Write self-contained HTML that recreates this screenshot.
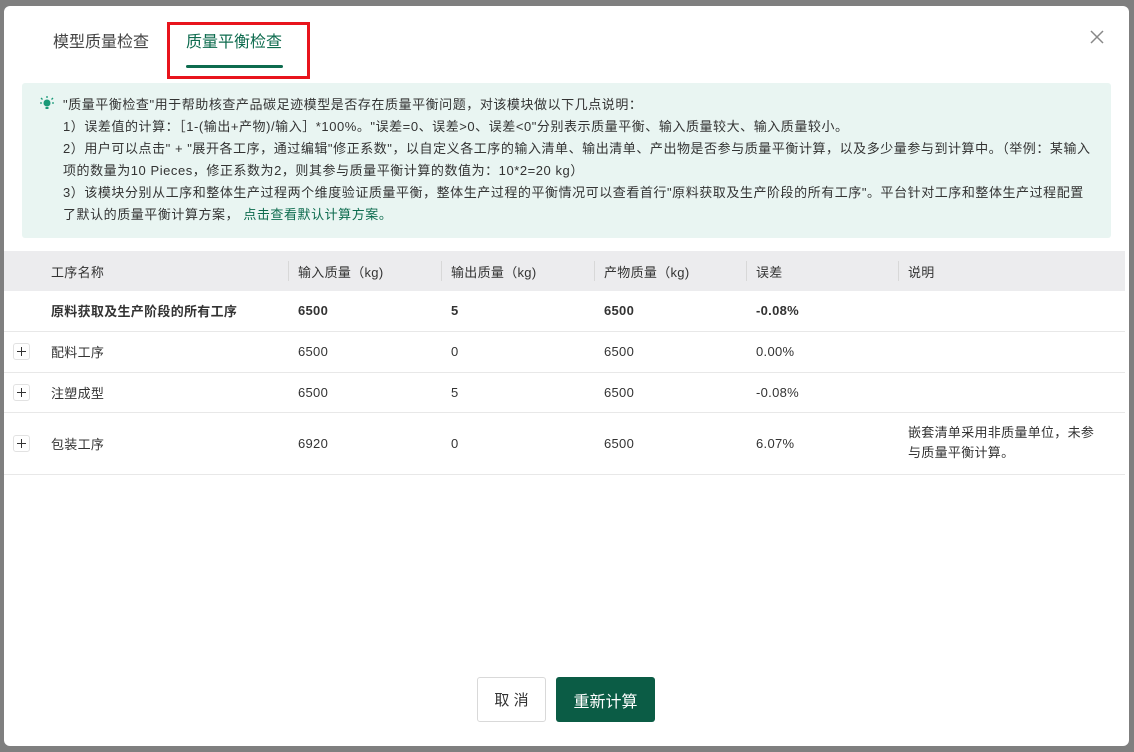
<!DOCTYPE html>
<html><head><meta charset="utf-8"><style>
*{margin:0;padding:0;box-sizing:border-box}
body{width:1134px;height:752px;background:#7f7f7f;font-family:"Liberation Sans","Noto Sans CJK SC",sans-serif;color:#333;position:relative;overflow:hidden}
.modal{position:absolute;left:4px;top:6px;width:1125px;height:740px;background:#fff;border-radius:6px}
.tab{position:absolute;top:28px;font-size:16px;color:#444}
.redbox{position:absolute;left:167px;top:22px;width:143px;height:57px;border:3px solid #e8141c}
.ul{position:absolute;left:186px;top:65px;width:97px;height:3px;background:#0d6b4e;border-radius:2px}
.close{position:absolute;left:1088px;top:28px;width:18px;height:18px}
.notice{position:absolute;left:22px;top:83px;width:1089px;height:155px;background:#e9f5f2;border-radius:3px;font-size:13px;letter-spacing:0.55px;line-height:22px;color:#333;padding:11px 0 0 41px;white-space:nowrap}
.notice a{color:#0d6b4e;text-decoration:none}
.bulb{position:absolute;left:40px;top:96px}
table{position:absolute;left:4px;top:251px;width:1121px;border-collapse:collapse;font-size:13px;letter-spacing:0.3px}
th{background:#ececee;font-weight:normal;text-align:left;height:40px;color:#333;position:relative}
td{height:40px;border-bottom:1px solid #e8e8e8;color:#333}
th.s::before{content:"";position:absolute;left:0;top:10px;height:20px;width:1px;background:#d8d8d8}
th,td{padding-left:10px}
td.c0,th.c0{width:47px;padding:0}
td.c1,th.c1{width:237px;padding-left:0}
.pl{display:inline-block;width:17px;height:17px;border:1px solid #e2e2e2;border-radius:3px;margin-left:9px;position:relative;vertical-align:middle}
.pl::before{content:"";position:absolute;left:3px;top:7px;width:9px;height:1px;background:#333}
.pl::after{content:"";position:absolute;left:7px;top:3px;width:1px;height:9px;background:#333}
.b td{font-weight:bold}
.btn{position:absolute;top:677px;height:45px;font-size:15px;border-radius:3px;display:flex;align-items:center;justify-content:center}
</style></head><body>
<div class="modal"></div>
<div class="tab" style="left:53px">模型质量检查</div>
<div class="tab" style="left:186px;color:#0d6b4e">质量平衡检查</div>
<div class="ul"></div>
<div class="redbox"></div>
<svg class="close" viewBox="0 0 18 18"><path d="M3 3L15 15M15 3L3 15" stroke="#888" stroke-width="1.5"/></svg>
<div class="notice">"质量平衡检查"用于帮助核查产品碳足迹模型是否存在质量平衡问题，对该模块做以下几点说明：<br>
1）误差值的计算：［1-(输出+产物)/输入］*100%。"误差=0、误差&gt;0、误差&lt;0"分别表示质量平衡、输入质量较大、输入质量较小。<br>
2）用户可以点击" + "展开各工序，通过编辑"修正系数"，以自定义各工序的输入清单、输出清单、产出物是否参与质量平衡计算，以及多少量参与到计算中。（举例：某输入<br>
项的数量为10 Pieces，修正系数为2，则其参与质量平衡计算的数值为：10*2=20 kg）<br>
3）该模块分别从工序和整体生产过程两个维度验证质量平衡，整体生产过程的平衡情况可以查看首行"原料获取及生产阶段的所有工序"。平台针对工序和整体生产过程配置<br>
了默认的质量平衡计算方案，&nbsp;<a>点击查看默认计算方案。</a></div>
<svg class="bulb" width="14" height="16" viewBox="0 0 14 16"><circle cx="7" cy="7" r="3.5" fill="#1a9a78"/><rect x="5.5" y="11" width="3" height="2" fill="#1a9a78"/><path d="M7 0v2M1 2l1.5 1.5M13 2l-1.5 1.5M0 7h2M12 7h2" stroke="#1a9a78" stroke-width="1.3"/></svg>
<table>
<tr><th class="c0"></th><th class="c1">工序名称</th><th class="s" style="width:153px">输入质量（kg)</th><th class="s" style="width:153px">输出质量（kg)</th><th class="s" style="width:152px">产物质量（kg)</th><th class="s" style="width:152px">误差</th><th class="s">说明</th></tr>
<tr class="b"><td class="c0"></td><td class="c1">原料获取及生产阶段的所有工序</td><td>6500</td><td>5</td><td>6500</td><td>-0.08%</td><td></td></tr>
<tr style="height:41px"><td class="c0"><span class="pl"></span></td><td class="c1">配料工序</td><td>6500</td><td>0</td><td>6500</td><td>0.00%</td><td></td></tr>
<tr><td class="c0"><span class="pl"></span></td><td class="c1">注塑成型</td><td>6500</td><td>5</td><td>6500</td><td>-0.08%</td><td></td></tr>
<tr><td class="c0" style="height:62px"><span class="pl"></span></td><td class="c1">包装工序</td><td>6920</td><td>0</td><td>6500</td><td>6.07%</td><td style="line-height:20px">嵌套清单采用非质量单位，未参<br>与质量平衡计算。</td></tr>
</table>
<div class="btn" style="left:477px;width:69px;border:1px solid #d9d9d9;color:#333">取 消</div>
<div class="btn" style="left:556px;width:99px;background:#0b5c45;color:#fff;font-size:16px">重新计算</div>
</body></html>
